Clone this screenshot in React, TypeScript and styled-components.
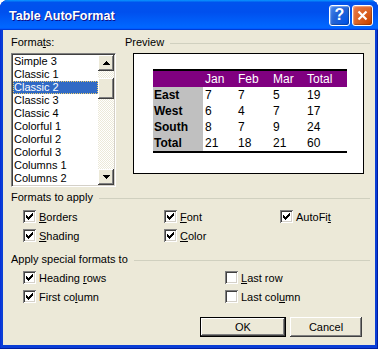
import React from "react";
import styled, { createGlobalStyle } from "styled-components";

const Global = createGlobalStyle`
  html, body { margin: 0; padding: 0; background: #fff; }
  body {
    font-family: "Liberation Sans", Arial, sans-serif;
    font-size: 11px;
    color: #000;
  }
  * { box-sizing: border-box; }
`;

const Window = styled.div`
  width: 378px;
  background: #0a3ed6;
  border-radius: 8px 8px 0 0;
  box-shadow: inset -1px -1px 0 #001ea0, inset 1px 0 0 #0831d9;
  display: flex;
  flex-direction: column;
  padding-bottom: 4px;
`;

const TitleBar = styled.div`
  height: 30px;
  border-radius: 8px 8px 0 0;
  background: linear-gradient(
    to bottom,
    #0997ff 0%,
    #0053ee 8%,
    #0050ee 40%,
    #0066ff 88%,
    #0066ff 93%,
    #005bff 95%,
    #003dd7 96%,
    #003dd7 100%
  );
  display: flex;
  align-items: center;
  padding: 0 5px 0 9px;
`;

const Title = styled.div`
  font-family: "Liberation Sans", Arial, sans-serif;
  font-weight: bold;
  font-size: 12.5px;
  color: #fff;
  text-shadow: 1px 1px 0 #0f1089;
  flex: 1;
  padding-top: 1px;
`;

const Controls = styled.div`
  display: flex;
  gap: 2px;
`;

const CtrlButton = styled.div<{ $kind: "help" | "close" }>`
  width: 21px;
  height: 21px;
  border: 1px solid #fff;
  border-radius: 3px;
  display: flex;
  align-items: center;
  justify-content: center;
  color: #fff;
  font-family: "Liberation Sans", Arial, sans-serif;
  font-weight: bold;
  font-size: 16px;
  background: ${(p) =>
    p.$kind === "close"
      ? "radial-gradient(circle at 90% 90%, #cc4600 0%, #dc6527 55%, #e87b4f 100%)"
      : "radial-gradient(circle at 90% 90%, #0054e9 0%, #2263d5 55%, #4d8cf0 100%)"};
  box-shadow: inset -1px -1px 1px rgba(0, 0, 0, 0.25), inset 1px 1px 1px rgba(255, 255, 255, 0.35);
`;

const Body = styled.div`
  margin: 0 3px;
  background: #ece9d8;
  display: flex;
  flex-direction: column;
  padding: 6px 5px 8px 8px;
`;

const TopSection = styled.div`
  display: flex;
  gap: 9px;
`;

const FormatsColumn = styled.div`
  width: 105px;
  display: flex;
  flex-direction: column;
`;

const Label = styled.div`
  line-height: 13px;
  height: 13px;
  margin-bottom: 4px;
  white-space: nowrap;
`;

const ListBox = styled.div`
  height: 134px;
  background: #fff;
  border-top: 1px solid #808080;
  border-left: 1px solid #808080;
  border-right: 1px solid #fff;
  border-bottom: 1px solid #fff;
  box-shadow: inset 1px 1px 0 #404040, inset -1px -1px 0 #d4d0c8;
  padding: 1px;
  display: flex;
`;

const Items = styled.div`
  flex: 1;
  display: flex;
  flex-direction: column;
`;

const Item = styled.div<{ $selected?: boolean }>`
  height: 13px;
  line-height: 13px;
  padding-left: 1px;
  white-space: nowrap;
  background: ${(p) => (p.$selected ? "#316ac5" : "transparent")};
  color: ${(p) => (p.$selected ? "#fff" : "#000")};
  outline: ${(p) => (p.$selected ? "1px dotted #f0d070" : "none")};
  outline-offset: -1px;
`;

const ScrollBar = styled.div`
  width: 16px;
  display: flex;
  flex-direction: column;
  background: repeating-conic-gradient(#ece9d8 0% 25%, #fff 0% 50%) 0 0 / 2px 2px;
`;

const ScrollButton = styled.div`
  width: 16px;
  height: 16px;
  background: #ece9d8;
  box-shadow: inset -1px -1px 0 #404040, inset 1px 1px 0 #fff, inset -2px -2px 0 #808080;
  display: flex;
  align-items: center;
  justify-content: center;
`;

const Thumb = styled.div`
  width: 16px;
  height: 21px;
  margin-top: 7px;
  background: #ece9d8;
  box-shadow: inset -1px -1px 0 #404040, inset 1px 1px 0 #fff, inset -2px -2px 0 #808080;
`;

const Spacer = styled.div`
  flex: 1;
`;

const PreviewColumn = styled.div`
  flex: 1;
  display: flex;
  flex-direction: column;
`;

const GroupHeader = styled.div`
  display: flex;
  align-items: center;
  gap: 6px;
  line-height: 13px;
  height: 13px;
  white-space: nowrap;
  &::after {
    content: "";
    flex: 1;
    height: 1px;
    background: #d0d0bf;
    margin-top: 1px;
  }
`;

const PreviewBox = styled.div`
  margin: 4px 6px 0 8px;
  height: 121px;
  background: #fff;
  border: 1px solid #000;
  padding: 15px 0 0 19px;
`;

const SampleTable = styled.div`
  width: 194px;
  display: grid;
  grid-template-columns: 50px 33px 35px 34px 42px;
  grid-auto-rows: 16px;
  border-top: 2px solid #000;
  border-bottom: 2px solid #000;
  font-family: "Liberation Sans", Arial, sans-serif;
  font-size: 12px;
`;

const Cell = styled.div<{ $head?: boolean; $first?: boolean }>`
  line-height: 16px;
  padding-left: 2px;
  white-space: nowrap;
  background: ${(p) => (p.$head ? "#800080" : p.$first ? "#c0c0c0" : "#fff")};
  color: ${(p) => (p.$head ? "#fff" : "#000")};
  font-weight: ${(p) => (p.$first && !p.$head ? "bold" : "normal")};
  padding-left: ${(p) => (p.$first ? "1px" : "2px")};
`;

const Section = styled.div<{ $mt: number }>`
  margin-top: ${(p) => p.$mt}px;
`;

const CheckGrid = styled.div<{ $cols: string; $mt: number }>`
  display: grid;
  grid-template-columns: ${(p) => p.$cols};
  grid-auto-rows: 19px;
  padding-left: 12px;
  margin-top: ${(p) => p.$mt}px;
`;

const CheckItem = styled.div`
  display: flex;
  align-items: center;
  gap: 3px;
  white-space: nowrap;
`;

const Box = styled.span`
  width: 13px;
  height: 13px;
  background: #fff;
  box-shadow: inset 1px 1px 0 #808080, inset -1px -1px 0 #fff, inset 2px 2px 0 #404040,
    inset -2px -2px 0 #d4d0c8;
  display: inline-flex;
  flex: none;
`;

const Buttons = styled.div`
  display: flex;
  justify-content: flex-end;
  gap: 4px;
  margin-top: 11px;
  padding-right: 8px;
`;

const Button = styled.div<{ $default?: boolean; $w: number }>`
  width: ${(p) => p.$w}px;
  height: 20px;
  background: #ece9d8;
  display: flex;
  align-items: center;
  justify-content: center;
  border: ${(p) => (p.$default ? "1px solid #000" : "none")};
  box-shadow: inset -1px -1px 0 #404040, inset 1px 1px 0 #fff, inset -2px -2px 0 #808080;
`;

const Check = ({ checked, children }: { checked: boolean; children: React.ReactNode }) => (
  <CheckItem>
    <Box>
      {checked && (
        <svg width="13" height="13" viewBox="0 0 13 13" shapeRendering="crispEdges">
          <path
            d="M3 5h1v1h1v1h1V6h1V5h1V4h1V3h1v3H9v1H8v1H7v1H6v1H5V9H4V8H3z"
            fill="#000"
          />
        </svg>
      )}
    </Box>
    <span>{children}</span>
  </CheckItem>
);

const Arrow = ({ up }: { up: boolean }) => (
  <svg width="7" height="4" viewBox="0 0 7 4" shapeRendering="crispEdges">
    <path d={up ? "M3 0h1v1h1v1h1v1h1v1H0V3h1V2h1V1h1z" : "M0 0h7v1H6v1H5v1H4v1H3V3H2V2H1V1H0z"} fill="#000" />
  </svg>
);

const formats = [
  "Simple 3",
  "Classic 1",
  "Classic 2",
  "Classic 3",
  "Classic 4",
  "Colorful 1",
  "Colorful 2",
  "Colorful 3",
  "Columns 1",
  "Columns 2",
];

const rows: [string, string, string, string, string][] = [
  ["", "Jan", "Feb", "Mar", "Total"],
  ["East", "7", "7", "5", "19"],
  ["West", "6", "4", "7", "17"],
  ["South", "8", "7", "9", "24"],
  ["Total", "21", "18", "21", "60"],
];

export default function App() {
  return (
    <>
      <Global />
      <Window>
        <TitleBar>
          <Title>Table AutoFormat</Title>
          <Controls>
            <CtrlButton $kind="help">?</CtrlButton>
            <CtrlButton $kind="close">
              <svg width="11" height="11" viewBox="0 0 11 11">
                <path d="M1.5 1.5l8 8M9.5 1.5l-8 8" stroke="#fff" strokeWidth="2.2" />
              </svg>
            </CtrlButton>
          </Controls>
        </TitleBar>
        <Body>
          <TopSection>
            <FormatsColumn>
              <Label>
                Forma<u>t</u>s:
              </Label>
              <ListBox>
                <Items>
                  {formats.map((f) => (
                    <Item key={f} $selected={f === "Classic 2"}>
                      {f}
                    </Item>
                  ))}
                </Items>
                <ScrollBar>
                  <ScrollButton>
                    <Arrow up />
                  </ScrollButton>
                  <Thumb />
                  <Spacer />
                  <ScrollButton>
                    <Arrow up={false} />
                  </ScrollButton>
                </ScrollBar>
              </ListBox>
            </FormatsColumn>
            <PreviewColumn>
              <GroupHeader>Preview</GroupHeader>
              <PreviewBox>
                <SampleTable>
                  {rows.map((r, ri) =>
                    r.map((c, ci) => (
                      <Cell key={`${ri}-${ci}`} $head={ri === 0} $first={ci === 0}>
                        {c}
                      </Cell>
                    ))
                  )}
                </SampleTable>
              </PreviewBox>
            </PreviewColumn>
          </TopSection>

          <Section $mt={4}>
            <GroupHeader>Formats to apply</GroupHeader>
            <CheckGrid $cols="141px 116px 1fr" $mt={3}>
              <Check checked>
                <u>B</u>orders
              </Check>
              <Check checked>
                <u>F</u>ont
              </Check>
              <Check checked>
                AutoFi<u>t</u>
              </Check>
              <Check checked>
                <u>S</u>hading
              </Check>
              <Check checked>
                <u>C</u>olor
              </Check>
            </CheckGrid>
          </Section>

          <Section $mt={8}>
            <GroupHeader>Apply special formats to</GroupHeader>
            <CheckGrid $cols="202px 1fr" $mt={2}>
              <Check checked>
                Heading <u>r</u>ows
              </Check>
              <Check checked={false}>
                <u>L</u>ast row
              </Check>
              <Check checked>
                First co<u>l</u>umn
              </Check>
              <Check checked={false}>
                Last col<u>u</u>mn
              </Check>
            </CheckGrid>
          </Section>

          <Buttons>
            <Button $default $w={86}>OK</Button>
            <Button $w={72}>Cancel</Button>
          </Buttons>
        </Body>
      </Window>
    </>
  );
}
